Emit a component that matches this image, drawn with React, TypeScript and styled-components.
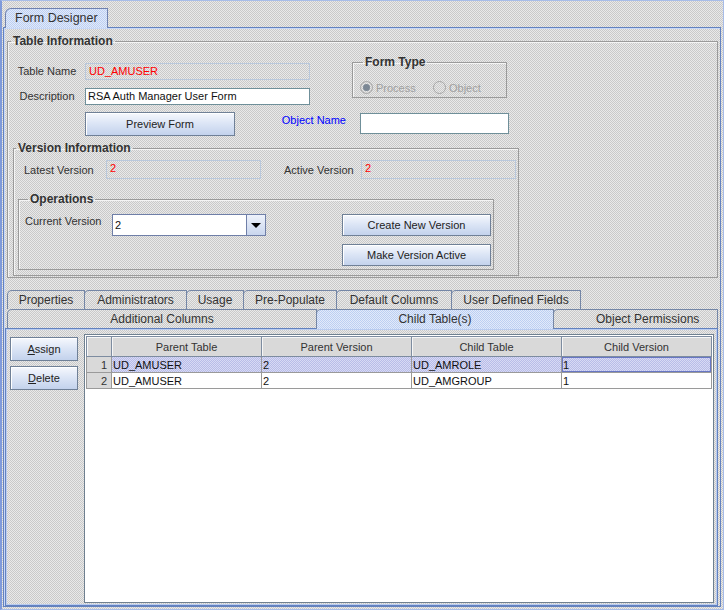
import React from "react";
import styled, { createGlobalStyle } from "styled-components";

const dither = "repeating-conic-gradient(#c9c9c9 0% 25%, #e9e9e9 0% 50%) 0 0 / 2px 2px";
const blueDither = "repeating-conic-gradient(#bccff2 0% 25%, #e2eafa 0% 50%) 0 0 / 2px 2px";
const lavDither = "repeating-conic-gradient(#b8bce8 0% 25%, #d8daf4 0% 50%) 0 0 / 2px 2px";

const Global = createGlobalStyle`
  html, body { margin: 0; padding: 0; }
  body {
    background: ${dither};
    font-family: "Liberation Sans", Arial, sans-serif;
    color: #333;
  }
  * { box-sizing: border-box; }
`;

const Frame = styled.div`
  width: 724px;
  height: 610px;
  display: flex;
  flex-direction: column;
  border: 1px solid #a8bde8;
  border-left: 2px solid #7f9ada;
  padding: 0 2px 2px 1px;
  background: ${dither};
`;

const TopTabs = styled.div`
  height: 26px;
  display: flex;
  align-items: flex-end;
  padding-left: 2px;
`;

const TopTab = styled.div`
  position: relative;
  z-index: 1;
  width: 103px;
  height: 20px;
  margin-bottom: -1px;
  border: 1px solid #6f82b0;
  border-bottom: none;
  border-top-left-radius: 6px;
  background: ${blueDither};
  font-size: 12.5px;
  line-height: 18px;
  padding-left: 9px;
  color: #333;
`;

const MainPanel = styled.div`
  flex: 1;
  display: flex;
  flex-direction: column;
  border: 1px solid #6382bf;
  box-shadow: inset 1px 1px 0 #c8d8f8;
  padding: 6px 2px 0 3px;
`;

const Group = styled.fieldset`
  margin: 0;
  padding: 0;
  border: 1px solid #9a9a9a;
  box-shadow: inset 1px 1px 0 #f4f4f4;
  min-width: 0;
`;

const Title = styled.legend<{ $offset: number }>`
  margin-left: ${(p) => p.$offset}px;
  padding: 0 2px;
  font-size: 12px;
  line-height: 14px;
  font-weight: bold;
  color: #333;
`;

const TableInfo = styled(Group)`
  padding: 7px 0 1px 0;
`;

const TopGrid = styled.div`
  display: grid;
  margin-left: 6px;
  grid-template-columns: 66px 5px 150px 75px 42px 8px 147px 2px;
  grid-template-rows: 8px 17px 8px 17px 7px 24px;
  width: 495px;
`;

const Label = styled.div<{ $row: number }>`
  grid-column: 1;
  grid-row: ${(p) => p.$row};
  text-align: center;
  font-size: 11px;
  line-height: 17px;
  white-space: nowrap;
`;

const ReadField = styled.div<{ $width?: number }>`
  ${(p) => (p.$width ? `width: ${p.$width}px;` : "")}
  height: 100%;
  border: 1px solid #b9c8dc;
  color: #ff0000;
  font-size: 11px;
  line-height: 15px;
  padding-left: 3px;
`;

const TextField = styled.div`
  border: 1px solid #6f8f99;
  background: #fff;
  color: #111;
  font-size: 11px;
  line-height: 15px;
  padding-left: 2px;
`;

const WideCell = styled.div<{ $row: number }>`
  grid-column: 3 / span 2;
  grid-row: ${(p) => p.$row};
`;

const Button = styled.div<{ $h: number; $w?: number }>`
  height: ${(p) => p.$h}px;
  ${(p) => (p.$w ? `width: ${p.$w}px;` : "")}
  display: flex;
  align-items: center;
  justify-content: center;
  border: 1px solid #6f8097;
  background: linear-gradient(#f6f8fd, #dde6f6 45%, #c3d2ec);
  box-shadow: inset 1px 1px 0 #fff;
  font-size: 11px;
  color: #222;
  white-space: nowrap;
  u { text-decoration: underline; }
`;

const PreviewCell = styled.div`
  grid-column: 3;
  grid-row: 6;
`;

const FormType = styled(Group)`
  grid-column: 6 / span 2;
  grid-row: 1 / span 4;
  height: 43px;
  padding: 12px 0 0 7px;
`;

const Radios = styled.div`
  display: flex;
  height: 13px;
  align-items: center;
`;

const Radio = styled.div`
  width: 80px;
  display: flex;
  align-items: center;
  gap: 3px;
  font-size: 11px;
  color: #a0a0a0;
`;

const Circle = styled.span<{ $on?: boolean }>`
  width: 13px;
  height: 13px;
  border-radius: 50%;
  border: 1px solid #a6a6a6;
  display: flex;
  align-items: center;
  justify-content: center;
  &::after {
    content: "";
    width: 7px;
    height: 7px;
    border-radius: 50%;
    background: ${(p) => (p.$on ? "#7b8794" : "transparent")};
  }
`;

const ObjectLabel = styled.div`
  grid-column: 4 / span 2;
  grid-row: 6;
  text-align: right;
  padding-right: 6px;
  font-size: 11px;
  line-height: 17px;
  color: #0000ff;
`;

const ObjectField = styled(TextField)`
  grid-column: 7 / span 2;
  grid-row: 6;
  margin-top: 1px;
  height: 21px;
`;

const Version = styled(Group)`
  margin: 5px 0 0 5px;
  width: 506px;
  padding: 5px 0 5px 0;
`;

const VersionRow = styled.div`
  display: flex;
  height: 19px;
  align-items: center;
  padding-left: 10px;
`;

const InlineLabel = styled.div<{ $w: number }>`
  width: ${(p) => p.$w}px;
  font-size: 11px;
  white-space: nowrap;
`;

const Operations = styled(Group)`
  margin: 13px 0 0 4px;
  width: 476px;
  height: 78px;
  padding: 8px 0 0 6px;
  display: flex;
  align-items: flex-start;
`;

const Combo = styled.div`
  width: 154px;
  height: 22px;
  display: flex;
  border: 1px solid #6f7fa8;
  background: #fff;
`;

const ComboValue = styled.div`
  flex: 1;
  font-size: 11px;
  line-height: 20px;
  padding-left: 2px;
  color: #111;
`;

const ComboArrow = styled.div`
  width: 19px;
  border-left: 1px solid #6f7fa8;
  background: linear-gradient(#eef2fb, #c9d6ee);
  display: flex;
  align-items: center;
  justify-content: center;
  &::after {
    content: "";
    border-left: 5px solid transparent;
    border-right: 5px solid transparent;
    border-top: 5px solid #000;
  }
`;

const OpsButtons = styled.div`
  margin-left: auto;
  margin-right: 2px;
  display: flex;
  flex-direction: column;
  gap: 8px;
`;

const TabArea = styled.div`
  flex: 1;
  display: flex;
  flex-direction: column;
  margin: 12px 0 0 -2px;
`;

const TabRow = styled.div`
  display: flex;
  height: 19px;
  padding-left: 2px;
`;

const Tab = styled.div<{ $w: number; $on?: boolean; $pad?: number }>`
  position: relative;
  ${(p) => (p.$on ? "z-index: 1;" : "")}
  width: ${(p) => p.$w}px;
  height: ${(p) => (p.$on ? 20 : 19)}px;
  margin-right: -1px;
  border: 1px solid #7486a6;
  border-bottom: none;
  border-top-left-radius: 5px;
  background: ${(p) => (p.$on ? blueDither : dither)};
  font-size: 12px;
  line-height: 18px;
  padding-left: ${(p) => (p.$pad !== undefined ? `${p.$pad}px` : "0")};
  text-align: ${(p) => (p.$pad !== undefined ? "left" : "center")};
  white-space: nowrap;
  color: #333;
`;

const TabContent = styled.div`
  flex: 1;
  display: flex;
  border: 1px solid #6382bf;
  box-shadow: inset 1px 1px 0 #b9ccf0, inset -1px -1px 0 #b9ccf0;
  padding: 5px 3px 2px 4px;
`;

const SideButtons = styled.div`
  width: 68px;
  margin: 3px 6px 0 0;
  display: flex;
  flex-direction: column;
  gap: 5px;
`;

const ScrollPane = styled.div`
  flex: 1;
  border: 1px solid #6f8090;
  box-shadow: inset 1px 1px 0 #fff;
  background: #fff;
  padding: 1px 0 0 1px;
`;

const Grid = styled.table`
  border-collapse: collapse;
  table-layout: fixed;
  width: 625px;
  font-size: 11px;
  color: #111;
`;

const Head = styled.th<{ $w: number }>`
  width: ${(p) => p.$w}px;
  height: 20px;
  padding: 0;
  background: ${dither};
  border: 1px solid #7d8ca0;
  box-shadow: inset 1px 1px 0 #f6f6f6;
  font-weight: normal;
  color: #333;
  text-align: center;
`;

const Row = styled.tr<{ $sel?: boolean }>`
  background: ${(p) => (p.$sel ? lavDither : "#fff")};
`;

const Cell = styled.td<{ $focus?: boolean }>`
  height: 16px;
  padding: 0 1px;
  border: 1px solid #9a9a9a;
  line-height: 14px;
  white-space: nowrap;
  ${(p) => (p.$focus ? "box-shadow: inset 0 0 0 1px #6877c4;" : "")}
`;

const NumCell = styled(Cell)`
  background: ${dither};
  text-align: right;
  padding-right: 4px;
  color: #333;
`;

const upperTabs = [
  { label: "Properties", w: 78 },
  { label: "Administrators", w: 103 },
  { label: "Usage", w: 58 },
  { label: "Pre-Populate", w: 94 },
  { label: "Default Columns", w: 116 },
  { label: "User Defined Fields", w: 130 },
];

const rows = [
  { parent: "UD_AMUSER", pver: "2", child: "UD_AMROLE", cver: "1" },
  { parent: "UD_AMUSER", pver: "2", child: "UD_AMGROUP", cver: "1" },
];

const App = () => {
  return (
    <>
      <Global />
      <Frame>
        <TopTabs>
          <TopTab>Form Designer</TopTab>
        </TopTabs>
        <MainPanel>
          <TableInfo>
            <Title $offset={3}>Table Information</Title>
            <TopGrid>
              <Label $row={2}>Table Name</Label>
              <WideCell $row={2}>
                <ReadField>UD_AMUSER</ReadField>
              </WideCell>
              <Label $row={4}>Description</Label>
              <WideCell $row={4}>
                <TextField>RSA Auth Manager User Form</TextField>
              </WideCell>
              <PreviewCell>
                <Button $h={24}>Preview Form</Button>
              </PreviewCell>
              <FormType>
                <Title $offset={3}>Form Type</Title>
                <Radios>
                  <Radio>
                    <Circle $on />
                    Process
                  </Radio>
                  <Radio>
                    <Circle />
                    Object
                  </Radio>
                </Radios>
              </FormType>
              <ObjectLabel>Object Name</ObjectLabel>
              <ObjectField />
            </TopGrid>
            <Version>
              <Title $offset={2}>Version Information</Title>
              <VersionRow>
                <InlineLabel $w={82}>Latest Version</InlineLabel>
                <ReadField $width={155}>2</ReadField>
                <InlineLabel $w={23} />
                <InlineLabel $w={77}>Active Version</InlineLabel>
                <ReadField $width={155}>2</ReadField>
              </VersionRow>
              <Operations>
                <Title $offset={3}>Operations</Title>
                <InlineLabel $w={87} style={{ marginTop: 1 }}>Current Version</InlineLabel>
                <Combo>
                  <ComboValue>2</ComboValue>
                  <ComboArrow />
                </Combo>
                <OpsButtons>
                  <Button $h={22} $w={149}>Create New Version</Button>
                  <Button $h={22} $w={149}>Make Version Active</Button>
                </OpsButtons>
              </Operations>
            </Version>
          </TableInfo>
          <TabArea>
            <TabRow>
              {upperTabs.map((t) => (
                <Tab key={t.label} $w={t.w}>{t.label}</Tab>
              ))}
            </TabRow>
            <TabRow>
              <Tab $w={310}>Additional Columns</Tab>
              <Tab $w={238} $on>Child Table(s)</Tab>
              <Tab $w={165} $pad={42}>Object Permissions</Tab>
            </TabRow>
            <TabContent>
              <SideButtons>
                <Button $h={24}><u>A</u>ssign</Button>
                <Button $h={24}><u>D</u>elete</Button>
              </SideButtons>
              <ScrollPane>
                <Grid>
                  <thead>
                    <tr>
                      <Head $w={25} />
                      <Head $w={150}>Parent Table</Head>
                      <Head $w={150}>Parent Version</Head>
                      <Head $w={150}>Child Table</Head>
                      <Head $w={150}>Child Version</Head>
                    </tr>
                  </thead>
                  <tbody>
                    {rows.map((r, i) => (
                      <Row key={i} $sel={i === 0}>
                        <NumCell>{i + 1}</NumCell>
                        <Cell>{r.parent}</Cell>
                        <Cell>{r.pver}</Cell>
                        <Cell>{r.child}</Cell>
                        <Cell $focus={i === 0}>{r.cver}</Cell>
                      </Row>
                    ))}
                  </tbody>
                </Grid>
              </ScrollPane>
            </TabContent>
          </TabArea>
        </MainPanel>
      </Frame>
    </>
  );
};

export default App;
